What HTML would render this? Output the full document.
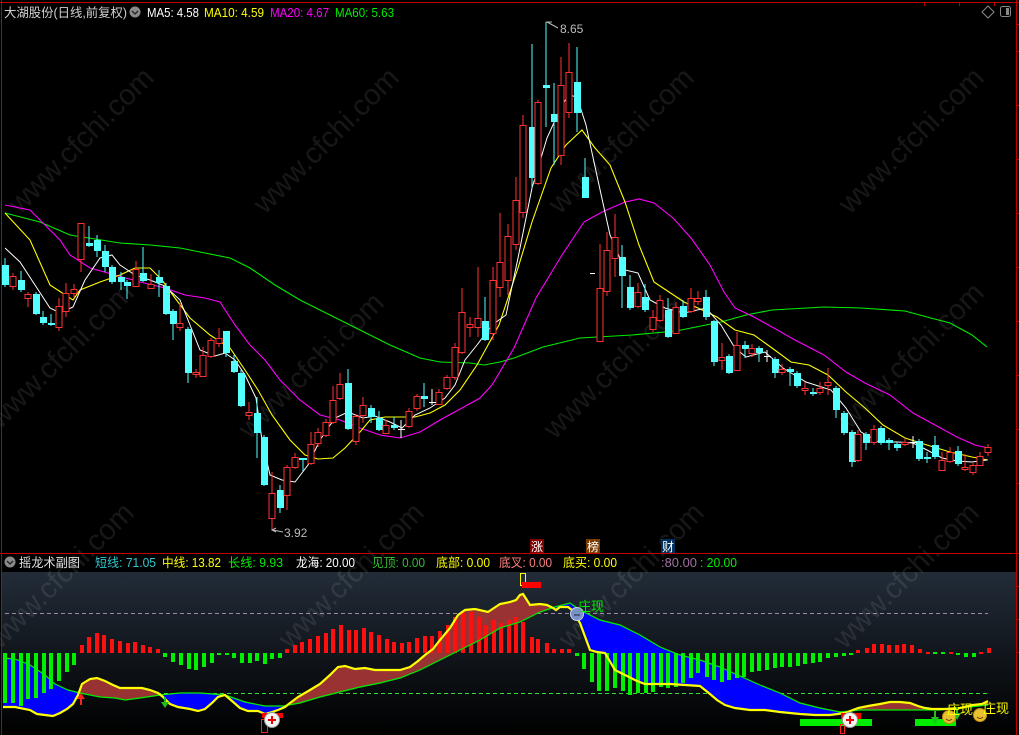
<!DOCTYPE html>
<html><head><meta charset="utf-8"><style>
html,body{margin:0;padding:0;background:#000;}
body{width:1019px;height:735px;overflow:hidden;position:relative;font-family:"Liberation Sans","Noto Sans CJK SC",sans-serif;}
svg{position:absolute;left:0;top:0;}
.r line{stroke:#ff3232}.r rect{fill:#000;stroke:#ff3232;stroke-width:1}
.c line{stroke:#54ffff}.c rect{fill:#54ffff}
</style></head><body>
<svg width="1019" height="735" viewBox="0 0 1019 735">
<defs>
<linearGradient id="bg" x1="0" y1="0" x2="0" y2="1">
<stop offset="0" stop-color="#222c38"/><stop offset="1" stop-color="#000"/>
</linearGradient>
<clipPath id="aboveG"><polygon points="3,572 3,658 15,659 30,665 45,675 55,684 68,690 80,693 90,695 100,697 115,698 125,700 140,698 160,695 180,693 200,693 225,695 245,702 265,706 283,706 300,703 320,697 340,692 360,687 380,683 400,678 420,670 440,660 460,650 480,640 500,628 520,622 540,612 555,607 570,603 580,610 600,620 620,625 640,635 660,647 680,655 700,660 720,667 740,676 760,685 780,693 800,703 820,708 840,712 860,710 880,710 900,710 920,710 940,710 960,708 988,705 988,572"/></clipPath>
<clipPath id="belowG"><polygon points="3,735 3,658 15,659 30,665 45,675 55,684 68,690 80,693 90,695 100,697 115,698 125,700 140,698 160,695 180,693 200,693 225,695 245,702 265,706 283,706 300,703 320,697 340,692 360,687 380,683 400,678 420,670 440,660 460,650 480,640 500,628 520,622 540,612 555,607 570,603 580,610 600,620 620,625 640,635 660,647 680,655 700,660 720,667 740,676 760,685 780,693 800,703 820,708 840,712 860,710 880,710 900,710 920,710 940,710 960,708 988,705 988,735"/></clipPath>
</defs>
<rect x="0" y="0" width="1019" height="735" fill="#000"/>
<rect x="2" y="572" width="1014" height="163" fill="url(#bg)"/>
<g fill="#fff" fill-opacity="0.09" font-size="29" font-family="Liberation Sans,sans-serif">
<text transform="translate(20,215) rotate(-45)">www.cfchi.com</text>
<text transform="translate(265,215) rotate(-45)">www.cfchi.com</text>
<text transform="translate(560,215) rotate(-45)">www.cfchi.com</text>
<text transform="translate(850,215) rotate(-45)">www.cfchi.com</text>
<text transform="translate(0,430) rotate(-45)">www.cfchi.com</text>
<text transform="translate(250,440) rotate(-45)">www.cfchi.com</text>
<text transform="translate(555,440) rotate(-45)">www.cfchi.com</text>
<text transform="translate(850,430) rotate(-45)">www.cfchi.com</text>
<text transform="translate(0,650) rotate(-45)">www.cfchi.com</text>
<text transform="translate(290,650) rotate(-45)">www.cfchi.com</text>
<text transform="translate(570,650) rotate(-45)">www.cfchi.com</text>
<text transform="translate(845,650) rotate(-45)">www.cfchi.com</text>
</g>
<line x1="0" y1="2.5" x2="1019" y2="2.5" stroke="#c00000"/>
<line x1="1.5" y1="0" x2="1.5" y2="735" stroke="#c00000"/>
<line x1="1016.5" y1="0" x2="1016.5" y2="735" stroke="#c00000"/>
<line x1="0" y1="553.5" x2="1019" y2="553.5" stroke="#c00000"/>
<g stroke="#c00000"><line x1="924.5" y1="2" x2="924.5" y2="6"/><line x1="959.5" y1="2" x2="959.5" y2="6"/><line x1="994.5" y1="2" x2="994.5" y2="6"/>
<line x1="1016" y1="24.5" x2="1019" y2="24.5"/><line x1="1016" y1="51.5" x2="1019" y2="51.5"/><line x1="1016" y1="105.5" x2="1019" y2="105.5"/><line x1="1016" y1="159.5" x2="1019" y2="159.5"/><line x1="1016" y1="213.5" x2="1019" y2="213.5"/><line x1="1016" y1="267.5" x2="1019" y2="267.5"/><line x1="1016" y1="321.5" x2="1019" y2="321.5"/><line x1="1016" y1="375.5" x2="1019" y2="375.5"/><line x1="1016" y1="429.5" x2="1019" y2="429.5"/><line x1="1016" y1="483.5" x2="1019" y2="483.5"/><line x1="1016" y1="586.5" x2="1019" y2="586.5"/><line x1="1016" y1="619.5" x2="1019" y2="619.5"/><line x1="1016" y1="652.5" x2="1019" y2="652.5"/>
</g>
<g fill="none" stroke-width="1.1">
<polyline stroke="#00ee00" points="5,213 40,222 70,235 120,243 150,245 180,248 200,252 230,258 250,268 275,285 300,300 330,315 360,330 390,345 420,358 440,362 470,363 484,365 500,362 514,358 543,347 580,338 632,335 676,331 721,322 746,315 772,310 824,307 861,308 905,311 927,317 950,323 972,335 987,347"/>
<polyline stroke="#ff00ff" points="5,205 30,210 45,225 60,240 70,255 90,268 115,275 140,282 165,288 185,295 205,298 220,302 235,325 250,345 265,360 280,380 300,400 320,415 340,420 360,428 380,435 400,438 420,432 440,420 462,408 480,398 492,385 514,348 536,298 562,255 584,222 602,212 625,202 639,199 654,203 673,218 691,238 710,265 724,292 735,308 754,317 772,327 795,340 824,355 846,372 865,383 890,395 913,413 935,425 957,437 975,445 988,448"/>
<polyline stroke="#ffff00" points="5,213 30,240 50,285 73,300 80,290 100,282 120,275 135,268 150,268 162,280 175,298 190,318 210,335 230,348 245,370 258,390 272,415 290,440 305,455 318,459 333,458 345,448 360,432 370,420 385,417 400,417 415,417 430,413 445,405 460,390 477,365 499,325 518,268 532,222 551,168 566,145 582,130 595,148 610,165 625,202 639,245 654,282 669,292 684,302 698,308 717,317 735,330 754,335 772,348 791,362 809,365 828,375 846,392 865,408 883,425 905,438 927,445 950,452 972,457 988,460"/>
<polyline stroke="#ffffff" stroke-width="1" points="5,248 20,262 35,285 50,308 60,313 73,307 85,280 100,258 112,255 120,265 135,275 150,280 165,286 180,300 190,325 200,350 215,356 225,353 235,360 245,375 256,398 262,440 270,475 282,480 295,482 308,465 320,440 335,418 348,412 363,418 375,416 390,422 402,428 415,415 430,408 445,398 455,385 465,360 477,345 492,325 506,315 518,258 532,188 547,138 562,105 569,95 577,97 586,125 599,185 610,235 625,270 638,273 650,300 665,308 684,313 706,308 721,325 735,348 746,357 765,352 783,368 806,382 831,390 846,408 861,432 879,442 898,442 913,443 927,450 942,458 957,461 972,462 987,460"/>
</g>
<g class="c">
<line x1="5" y1="258" x2="5" y2="287"/><rect x="2" y="265" width="7" height="20"/>
<line x1="21" y1="271" x2="21" y2="292"/><rect x="18" y="280" width="7" height="10"/>
<line x1="36" y1="292" x2="36" y2="315"/><rect x="33" y="294" width="7" height="20"/>
<line x1="43" y1="311" x2="43" y2="325"/><rect x="40" y="317" width="7" height="6"/>
<line x1="51" y1="314" x2="51" y2="326"/><rect x="48" y="323" width="7" height="2"/>
<line x1="89" y1="226" x2="89" y2="247"/><rect x="86" y="243" width="7" height="3"/>
<line x1="97" y1="235" x2="97" y2="257"/><rect x="94" y="240" width="7" height="11"/>
<line x1="105" y1="245" x2="105" y2="272"/><rect x="102" y="251" width="7" height="16"/>
<line x1="112" y1="265" x2="112" y2="284"/><rect x="109" y="267" width="7" height="15"/>
<line x1="121" y1="272" x2="121" y2="290"/><rect x="118" y="277" width="7" height="5"/>
<line x1="127" y1="280" x2="127" y2="299"/><rect x="124" y="282" width="7" height="4"/>
<line x1="143" y1="247" x2="143" y2="282"/><rect x="140" y="273" width="7" height="8"/>
<line x1="159" y1="270" x2="159" y2="297"/><rect x="156" y="277" width="7" height="6"/>
<line x1="166" y1="283" x2="166" y2="315"/><rect x="163" y="286" width="7" height="28"/>
<line x1="173" y1="309" x2="173" y2="340"/><rect x="170" y="311" width="7" height="13"/>
<line x1="188" y1="327" x2="188" y2="383"/><rect x="185" y="329" width="7" height="44"/>
<line x1="226" y1="331" x2="226" y2="357"/><rect x="223" y="331" width="7" height="22"/>
<line x1="234" y1="355" x2="234" y2="373"/><rect x="231" y="361" width="7" height="11"/>
<line x1="241" y1="370" x2="241" y2="407"/><rect x="238" y="373" width="7" height="33"/>
<line x1="257" y1="397" x2="257" y2="458"/><rect x="254" y="413" width="7" height="20"/>
<line x1="264" y1="435" x2="264" y2="486"/><rect x="261" y="437" width="7" height="48"/>
<line x1="280" y1="485" x2="280" y2="513"/><rect x="277" y="490" width="7" height="18"/>
<line x1="303" y1="458" x2="303" y2="471"/><rect x="299" y="458" width="8" height="2"/>
<line x1="348" y1="369" x2="348" y2="430"/><rect x="345" y="383" width="7" height="46"/>
<line x1="371" y1="405" x2="371" y2="423"/><rect x="368" y="408" width="7" height="9"/>
<line x1="379" y1="411" x2="379" y2="431"/><rect x="376" y="418" width="7" height="12"/>
<line x1="394" y1="417" x2="394" y2="430"/><rect x="391" y="425" width="7" height="3"/>
<line x1="424" y1="383" x2="424" y2="407"/><rect x="421" y="396" width="7" height="3"/>
<line x1="485" y1="297" x2="485" y2="341"/><rect x="482" y="321" width="7" height="19"/>
<line x1="532" y1="44" x2="532" y2="188"/><rect x="529" y="127" width="7" height="51"/>
<line x1="546" y1="22" x2="546" y2="127"/><rect x="543" y="85" width="7" height="3"/>
<line x1="554" y1="83" x2="554" y2="165"/><rect x="551" y="114" width="7" height="8"/>
<line x1="577" y1="47" x2="577" y2="132"/><rect x="574" y="82" width="7" height="31"/>
<line x1="585" y1="158" x2="585" y2="198"/><rect x="582" y="177" width="7" height="21"/>
<line x1="622" y1="245" x2="622" y2="308"/><rect x="619" y="257" width="7" height="19"/>
<line x1="630" y1="275" x2="630" y2="310"/><rect x="627" y="287" width="7" height="21"/>
<line x1="645" y1="284" x2="645" y2="312"/><rect x="642" y="297" width="7" height="13"/>
<line x1="668" y1="298" x2="668" y2="338"/><rect x="665" y="310" width="7" height="27"/>
<line x1="683" y1="300" x2="683" y2="318"/><rect x="680" y="306" width="7" height="11"/>
<line x1="706" y1="290" x2="706" y2="320"/><rect x="703" y="297" width="7" height="20"/>
<line x1="714" y1="320" x2="714" y2="366"/><rect x="711" y="321" width="7" height="41"/>
<line x1="729" y1="354" x2="729" y2="374"/><rect x="726" y="356" width="7" height="17"/>
<line x1="745" y1="341" x2="745" y2="358"/><rect x="742" y="345" width="7" height="4"/>
<line x1="759" y1="346" x2="759" y2="362"/><rect x="756" y="348" width="7" height="5"/>
<line x1="775" y1="357" x2="775" y2="378"/><rect x="772" y="359" width="7" height="14"/>
<line x1="790" y1="367" x2="790" y2="386"/><rect x="787" y="369" width="7" height="3"/>
<line x1="797" y1="371" x2="797" y2="388"/><rect x="794" y="373" width="7" height="13"/>
<line x1="813" y1="388" x2="813" y2="396"/><rect x="810" y="392" width="7" height="2"/>
<line x1="836" y1="386" x2="836" y2="418"/><rect x="833" y="388" width="7" height="22"/>
<line x1="844" y1="411" x2="844" y2="435"/><rect x="841" y="413" width="7" height="20"/>
<line x1="852" y1="430" x2="852" y2="467"/><rect x="849" y="432" width="7" height="30"/>
<line x1="866" y1="432" x2="866" y2="450"/><rect x="863" y="434" width="7" height="9"/>
<line x1="881" y1="426" x2="881" y2="445"/><rect x="878" y="428" width="7" height="15"/>
<line x1="889" y1="438" x2="889" y2="450"/><rect x="886" y="440" width="7" height="3"/>
<line x1="897" y1="442" x2="897" y2="451"/><rect x="894" y="444" width="7" height="4"/>
<line x1="919" y1="439" x2="919" y2="461"/><rect x="916" y="441" width="7" height="18"/>
<line x1="927" y1="452" x2="927" y2="463"/><rect x="924" y="457" width="7" height="2"/>
<line x1="935" y1="436" x2="935" y2="459"/><rect x="932" y="445" width="7" height="12"/>
<line x1="958" y1="446" x2="958" y2="466"/><rect x="955" y="451" width="7" height="13"/>
</g>
<g class="r">
<line x1="13" y1="273" x2="13" y2="290"/><rect x="10" y="276.5" width="6" height="10"/>
<line x1="28" y1="292" x2="28" y2="307"/><rect x="25" y="294.5" width="6" height="4"/>
<line x1="59" y1="298" x2="59" y2="331"/><rect x="56" y="306.5" width="6" height="21"/>
<line x1="66" y1="283" x2="66" y2="317"/><rect x="63" y="293.5" width="6" height="18"/>
<line x1="74" y1="284" x2="74" y2="297"/><rect x="71" y="289.5" width="6" height="4"/>
<line x1="81" y1="223" x2="81" y2="272"/><rect x="78" y="223.5" width="6" height="36"/>
<line x1="136" y1="261" x2="136" y2="287"/><rect x="133" y="269.5" width="6" height="17"/>
<line x1="151" y1="274" x2="151" y2="289"/><rect x="148" y="284.5" width="6" height="4"/>
<line x1="180" y1="303" x2="180" y2="331"/><rect x="177" y="323.5" width="6" height="4"/>
<line x1="196" y1="369" x2="196" y2="378"/><rect x="193" y="372.5" width="6" height="2"/>
<line x1="203" y1="347" x2="203" y2="377"/><rect x="200" y="355.5" width="6" height="21"/>
<line x1="211" y1="338" x2="211" y2="358"/><rect x="208" y="340.5" width="6" height="16"/>
<line x1="219" y1="328" x2="219" y2="347"/><rect x="216" y="338.5" width="6" height="5"/>
<line x1="249" y1="402" x2="249" y2="420"/><rect x="246" y="412.5" width="6" height="3"/>
<line x1="272" y1="472" x2="272" y2="530"/><rect x="269" y="493.5" width="6" height="25"/>
<line x1="287" y1="465" x2="287" y2="510"/><rect x="284" y="467.5" width="6" height="28"/>
<line x1="295" y1="453" x2="295" y2="469"/><rect x="292" y="457.5" width="6" height="10"/>
<line x1="311" y1="432" x2="311" y2="465"/><rect x="308" y="444.5" width="6" height="19"/>
<line x1="318" y1="428" x2="318" y2="447"/><rect x="315" y="432.5" width="6" height="11"/>
<line x1="326" y1="419" x2="326" y2="437"/><rect x="323" y="422.5" width="6" height="13"/>
<line x1="333" y1="386" x2="333" y2="424"/><rect x="330" y="400.5" width="6" height="22"/>
<line x1="340" y1="373" x2="340" y2="400"/><rect x="337" y="384.5" width="6" height="14"/>
<line x1="356" y1="414" x2="356" y2="445"/><rect x="353" y="416.5" width="6" height="25"/>
<line x1="363" y1="397" x2="363" y2="423"/><rect x="360" y="405.5" width="6" height="10"/>
<line x1="386" y1="420" x2="386" y2="434"/><rect x="383" y="425.5" width="6" height="8"/>
<line x1="409" y1="408" x2="409" y2="428"/><rect x="406" y="411.5" width="6" height="15"/>
<line x1="417" y1="394" x2="417" y2="411"/><rect x="414" y="396.5" width="6" height="12"/>
<line x1="439" y1="389" x2="439" y2="405"/><rect x="436" y="392.5" width="6" height="12"/>
<line x1="447" y1="375" x2="447" y2="390"/><rect x="444" y="377.5" width="6" height="11"/>
<line x1="455" y1="343" x2="455" y2="380"/><rect x="452" y="347.5" width="6" height="30"/>
<line x1="462" y1="288" x2="462" y2="354"/><rect x="459" y="312.5" width="6" height="40"/>
<line x1="470" y1="317" x2="470" y2="337"/><rect x="467" y="324.5" width="6" height="3"/>
<line x1="478" y1="267" x2="478" y2="337"/><rect x="475" y="318.5" width="6" height="9"/>
<line x1="493" y1="267" x2="493" y2="340"/><rect x="490" y="280.5" width="6" height="53"/>
<line x1="500" y1="213" x2="500" y2="297"/><rect x="497" y="262.5" width="6" height="25"/>
<line x1="508" y1="224" x2="508" y2="295"/><rect x="505" y="236.5" width="6" height="44"/>
<line x1="516" y1="177" x2="516" y2="250"/><rect x="513" y="200.5" width="6" height="44"/>
<line x1="523" y1="115" x2="523" y2="218"/><rect x="520" y="125.5" width="6" height="87"/>
<line x1="538" y1="100" x2="538" y2="185"/><rect x="535" y="102.5" width="6" height="81"/>
<line x1="561" y1="57" x2="561" y2="165"/><rect x="558" y="85.5" width="6" height="70"/>
<line x1="569" y1="43" x2="569" y2="118"/><rect x="566" y="72.5" width="6" height="40"/>
<line x1="600" y1="244" x2="600" y2="341"/><rect x="597" y="288.5" width="6" height="53"/>
<line x1="607" y1="232" x2="607" y2="296"/><rect x="604" y="250.5" width="6" height="41"/>
<line x1="615" y1="214" x2="615" y2="277"/><rect x="612" y="237.5" width="6" height="21"/>
<line x1="638" y1="283" x2="638" y2="308"/><rect x="635" y="292.5" width="6" height="14"/>
<line x1="653" y1="310" x2="653" y2="332"/><rect x="650" y="317.5" width="6" height="12"/>
<line x1="660" y1="295" x2="660" y2="322"/><rect x="657" y="300.5" width="6" height="20"/>
<line x1="676" y1="302" x2="676" y2="334"/><rect x="673" y="307.5" width="6" height="26"/>
<line x1="691" y1="288" x2="691" y2="313"/><rect x="688" y="298.5" width="6" height="13"/>
<line x1="698" y1="291" x2="698" y2="305"/><rect x="695" y="298.5" width="6" height="3"/>
<line x1="722" y1="343" x2="722" y2="370"/><rect x="719" y="357.5" width="6" height="3"/>
<line x1="737" y1="332" x2="737" y2="371"/><rect x="734" y="345.5" width="6" height="25"/>
<line x1="752" y1="344" x2="752" y2="357"/><rect x="749" y="348.5" width="6" height="5"/>
<line x1="782" y1="364" x2="782" y2="375"/><rect x="779" y="369.5" width="6" height="3"/>
<line x1="805" y1="382" x2="805" y2="395"/><rect x="802" y="388.5" width="6" height="2"/>
<line x1="820" y1="382" x2="820" y2="395"/><rect x="817" y="388.5" width="6" height="4"/>
<line x1="828" y1="368" x2="828" y2="395"/><rect x="825" y="382.5" width="6" height="3"/>
<line x1="858" y1="430" x2="858" y2="462"/><rect x="855" y="434.5" width="6" height="26"/>
<line x1="874" y1="425" x2="874" y2="445"/><rect x="871" y="429.5" width="6" height="13"/>
<line x1="905" y1="438" x2="905" y2="446"/><rect x="902" y="442.5" width="6" height="2"/>
<line x1="942" y1="452" x2="942" y2="471"/><rect x="939" y="460.5" width="6" height="10"/>
<line x1="950" y1="447" x2="950" y2="463"/><rect x="947" y="452.5" width="6" height="9"/>
<line x1="965" y1="454" x2="965" y2="471"/><rect x="962" y="467.5" width="6" height="2"/>
<line x1="973" y1="463" x2="973" y2="475"/><rect x="970" y="465.5" width="6" height="7"/>
<line x1="980" y1="452" x2="980" y2="466"/><rect x="977" y="456.5" width="6" height="9"/>
<line x1="988" y1="444" x2="988" y2="456"/><rect x="985" y="447.5" width="6" height="5"/>
</g>
<g stroke="#fff"><line x1="401" y1="420" x2="401" y2="438"/><line x1="398" y1="429.5" x2="405" y2="429.5"/>
<line x1="432" y1="389" x2="432" y2="405"/><line x1="429" y1="402.5" x2="436" y2="402.5"/>
<line x1="590" y1="273.5" x2="595" y2="273.5"/>
<line x1="767" y1="350" x2="767" y2="362"/><line x1="764" y1="356.5" x2="771" y2="356.5"/>
<line x1="913" y1="436" x2="913" y2="448"/><line x1="910" y1="442.5" x2="917" y2="442.5"/></g>
<g fill="#bbb" font-size="12">
<text x="560" y="33">8.65</text>
<text x="284" y="537">3.92</text></g>
<g stroke="#bbb" fill="none"><polyline points="546,22 552,22"/><line x1="547" y1="22" x2="558" y2="28"/>
<line x1="273" y1="530" x2="283" y2="532"/><polyline points="276,528 272,530 276,532"/></g>
<path d="M988,6 L994,12 L988,18 L982,12 Z" fill="none" stroke="#888"/>
<rect x="1000.5" y="6.5" width="10" height="10" rx="2" fill="none" stroke="#888"/><rect x="1006" y="8" width="3" height="7" fill="#888"/>
<rect x="530" y="539" width="14" height="14" fill="#800000"/><text x="531" y="551" fill="#fff" font-size="12">涨</text>
<rect x="586" y="539" width="14" height="14" fill="#7a3a00"/><text x="587" y="551" fill="#fff" font-size="12">榜</text>
<rect x="661" y="539" width="14" height="14" fill="#003060"/><text x="662" y="551" fill="#fff" font-size="12">财</text>

<line x1="5" y1="613.5" x2="988" y2="613.5" stroke="#a088a8" stroke-dasharray="4,3"/>
<line x1="3" y1="693.5" x2="988" y2="693.5" stroke="#33dd33" stroke-dasharray="4,3"/>
<polygon clip-path="url(#aboveG)" fill="#993333" points="3,735 3,707 15,707 30,710 37,714 45,715 53,716 60,713 67,709 73,704 78,695 82,684 90,679 97,678 105,681 113,685 120,688 142,688 150,690 158,693 163,697 170,704 178,707 190,709 198,711 205,709 212,703 218,697 225,695 232,701 240,708 248,711 258,711 265,714 272,712 278,710 285,707 290,703 298,697 310,690 320,684 330,675 338,667 345,666 355,669 365,668 375,670 400,670 410,667 418,661 425,655 433,649 440,640 450,628 458,615 465,610 475,609 488,612 500,604 510,602 516,600 520,595 523,594 530,605 540,604 547,605 553,608 556,610 560,607 568,607 572,610 580,623 590,650 597,652 605,653 615,670 625,675 637,681 645,684 670,684 685,685 700,686 710,694 717,700 725,705 735,708 750,710 765,710 780,712 800,714 815,715 830,715 845,713 858,708 868,706 880,704 890,702 900,702 910,703 918,706 925,708 932,709 945,709 960,708 973,705 982,704 988,701 988,735"/>
<polygon clip-path="url(#belowG)" fill="#0000ff" points="3,572 3,707 15,707 30,710 37,714 45,715 53,716 60,713 67,709 73,704 78,695 82,684 90,679 97,678 105,681 113,685 120,688 142,688 150,690 158,693 163,697 170,704 178,707 190,709 198,711 205,709 212,703 218,697 225,695 232,701 240,708 248,711 258,711 265,714 272,712 278,710 285,707 290,703 298,697 310,690 320,684 330,675 338,667 345,666 355,669 365,668 375,670 400,670 410,667 418,661 425,655 433,649 440,640 450,628 458,615 465,610 475,609 488,612 500,604 510,602 516,600 520,595 523,594 530,605 540,604 547,605 553,608 556,610 560,607 568,607 572,610 580,623 590,650 597,652 605,653 615,670 625,675 637,681 645,684 670,684 685,685 700,686 710,694 717,700 725,705 735,708 750,710 765,710 780,712 800,714 815,715 830,715 845,713 858,708 868,706 880,704 890,702 900,702 910,703 918,706 925,708 932,709 945,709 960,708 973,705 982,704 988,701 988,572"/>
<g fill="#00ee00">
<rect x="3" y="653" width="4" height="50"/><rect x="11" y="653" width="4" height="50"/><rect x="19" y="653" width="4" height="53"/><rect x="26" y="653" width="4" height="46"/><rect x="34" y="653" width="4" height="45"/><rect x="42" y="653" width="4" height="40"/><rect x="49" y="653" width="4" height="36"/><rect x="57" y="653" width="4" height="28"/><rect x="65" y="653" width="4" height="19"/><rect x="72" y="653" width="4" height="12"/>
<rect x="163" y="653" width="4" height="4"/><rect x="171" y="653" width="4" height="9"/><rect x="179" y="653" width="4" height="12"/><rect x="187" y="653" width="4" height="16"/><rect x="194" y="653" width="4" height="17"/><rect x="202" y="653" width="4" height="14"/><rect x="210" y="653" width="4" height="10"/><rect x="217" y="653" width="4" height="2"/><rect x="225" y="653" width="4" height="2"/><rect x="232" y="653" width="4" height="5"/><rect x="240" y="653" width="4" height="10"/><rect x="248" y="653" width="4" height="10"/><rect x="255" y="653" width="4" height="8"/><rect x="263" y="653" width="4" height="11"/><rect x="270" y="653" width="4" height="6"/><rect x="278" y="653" width="4" height="5"/>
<rect x="575" y="653" width="4" height="3"/><rect x="582" y="653" width="4" height="16"/><rect x="590" y="653" width="4" height="29"/><rect x="597" y="653" width="4" height="38"/><rect x="605" y="653" width="4" height="38"/><rect x="613" y="653" width="4" height="35"/><rect x="621" y="653" width="4" height="38"/><rect x="628" y="653" width="4" height="42"/><rect x="636" y="653" width="4" height="40"/><rect x="644" y="653" width="4" height="40"/><rect x="651" y="653" width="4" height="39"/><rect x="659" y="653" width="4" height="34"/><rect x="666" y="653" width="4" height="35"/><rect x="674" y="653" width="4" height="34"/><rect x="681" y="653" width="4" height="30"/><rect x="689" y="653" width="4" height="25"/><rect x="696" y="653" width="4" height="20"/><rect x="705" y="653" width="4" height="24"/><rect x="712" y="653" width="4" height="27"/><rect x="720" y="653" width="4" height="29"/><rect x="727" y="653" width="4" height="27"/><rect x="735" y="653" width="4" height="25"/><rect x="742" y="653" width="4" height="24"/><rect x="750" y="653" width="4" height="19"/><rect x="757" y="653" width="4" height="18"/><rect x="765" y="653" width="4" height="17"/><rect x="773" y="653" width="4" height="15"/><rect x="780" y="653" width="4" height="14"/><rect x="788" y="653" width="4" height="14"/><rect x="796" y="653" width="4" height="13"/><rect x="803" y="653" width="4" height="11"/><rect x="811" y="653" width="4" height="10"/><rect x="818" y="653" width="4" height="9"/><rect x="826" y="653" width="4" height="5"/><rect x="834" y="653" width="4" height="4"/><rect x="842" y="653" width="4" height="3"/><rect x="849" y="653" width="4" height="2"/>
<rect x="933" y="652" width="4" height="2"/><rect x="941" y="652" width="4" height="2"/><rect x="956" y="653" width="4" height="2"/><rect x="964" y="653" width="4" height="4"/><rect x="972" y="653" width="4" height="4"/>
</g>
<g fill="#ff1010">
<rect x="80" y="645" width="4" height="8"/><rect x="87" y="637" width="4" height="16"/><rect x="95" y="633" width="4" height="20"/><rect x="102" y="635" width="4" height="18"/><rect x="110" y="639" width="4" height="14"/><rect x="118" y="641" width="4" height="12"/><rect x="126" y="643" width="4" height="10"/><rect x="133" y="642" width="4" height="11"/><rect x="141" y="645" width="4" height="8"/><rect x="148" y="647" width="4" height="6"/><rect x="156" y="649" width="4" height="4"/>
<rect x="285" y="649" width="4" height="4"/><rect x="293" y="645" width="4" height="8"/><rect x="300" y="642" width="4" height="11"/><rect x="308" y="639" width="4" height="14"/><rect x="316" y="636" width="4" height="17"/><rect x="324" y="633" width="4" height="20"/><rect x="331" y="629" width="4" height="24"/><rect x="339" y="625" width="4" height="28"/><rect x="347" y="630" width="4" height="23"/><rect x="354" y="630" width="4" height="23"/><rect x="362" y="628" width="4" height="25"/><rect x="369" y="632" width="4" height="21"/><rect x="377" y="635" width="4" height="18"/><rect x="385" y="639" width="4" height="14"/><rect x="392" y="642" width="4" height="11"/><rect x="400" y="643" width="4" height="10"/><rect x="407" y="642" width="4" height="11"/><rect x="415" y="638" width="4" height="15"/><rect x="423" y="636" width="4" height="17"/><rect x="430" y="636" width="4" height="17"/><rect x="438" y="631" width="4" height="22"/><rect x="446" y="625" width="4" height="28"/><rect x="453" y="617" width="4" height="36"/><rect x="461" y="613" width="4" height="40"/><rect x="469" y="612" width="4" height="41"/><rect x="477" y="617" width="4" height="36"/><rect x="484" y="625" width="4" height="28"/><rect x="492" y="620" width="4" height="33"/><rect x="499" y="623" width="4" height="30"/><rect x="507" y="620" width="4" height="33"/><rect x="514" y="617" width="4" height="36"/><rect x="521" y="622" width="4" height="31"/>
<rect x="530" y="637" width="4" height="16"/><rect x="536" y="639" width="4" height="14"/><rect x="545" y="643" width="4" height="10"/><rect x="552" y="649" width="4" height="4"/><rect x="560" y="649" width="4" height="4"/><rect x="567" y="649" width="4" height="4"/>
<rect x="856" y="650" width="4" height="3"/><rect x="865" y="648" width="4" height="5"/><rect x="872" y="644" width="4" height="9"/><rect x="880" y="644" width="4" height="9"/><rect x="887" y="645" width="4" height="8"/><rect x="895" y="645" width="4" height="8"/><rect x="902" y="644" width="4" height="9"/><rect x="910" y="645" width="4" height="8"/><rect x="918" y="649" width="4" height="4"/><rect x="926" y="652" width="4" height="2"/><rect x="949" y="652" width="4" height="2"/><rect x="979" y="652" width="4" height="2"/><rect x="987" y="648" width="4" height="5"/>
</g>
<polyline fill="none" stroke="#00ee00" stroke-width="1.2" points="3,658 15,659 30,665 45,675 55,684 68,690 80,693 90,695 100,697 115,698 125,700 140,698 160,695 180,693 200,693 225,695 245,702 265,706 283,706 300,703 320,697 340,692 360,687 380,683 400,678 420,670 440,660 460,650 480,640 500,628 520,622 540,612 555,607 570,603 580,610 600,620 620,625 640,635 660,647 680,655 700,660 720,667 740,676 760,685 780,693 800,703 820,708 840,712 860,710 880,710 900,710 920,710 940,710 960,708 988,705"/>
<polyline fill="none" stroke="#ffff00" stroke-width="2.2" points="3,707 15,707 30,710 37,714 45,715 53,716 60,713 67,709 73,704 78,695 82,684 90,679 97,678 105,681 113,685 120,688 142,688 150,690 158,693 163,697 170,704 178,707 190,709 198,711 205,709 212,703 218,697 225,695 232,701 240,708 248,711 258,711 265,714 272,712 278,710 285,707 290,703 298,697 310,690 320,684 330,675 338,667 345,666 355,669 365,668 375,670 400,670 410,667 418,661 425,655 433,649 440,640 450,628 458,615 465,610 475,609 488,612 500,604 510,602 516,600 520,595 523,594 530,605 540,604 547,605 553,608 556,610 560,607 568,607 572,610 580,623 590,650 597,652 605,653 615,670 625,675 637,681 645,684 670,684 685,685 700,686 710,694 717,700 725,705 735,708 750,710 765,710 780,712 800,714 815,715 830,715 845,713 858,708 868,706 880,704 890,702 900,702 910,703 918,706 925,708 932,709 945,709 960,708 973,705 982,704 988,701"/>
<path d="M81,693 L77,699 L80,699 L80,705 L82,705 L82,699 L85,699 Z" fill="#ff2020"/>
<path d="M165,708 L161,702 L164,702 L164,697 L166,697 L166,702 L169,702 Z" fill="#20c020"/>
<rect x="262" y="713" width="21" height="5" fill="#ff0000"/>
<rect x="261.5" y="719.5" width="6" height="13" fill="none" stroke="#ff2020"/>
<circle cx="272" cy="720" r="7.5" fill="#f4f4f4" stroke="#999"/><path d="M268,720 H276 M272,716 V724" stroke="#e00" stroke-width="2"/>
<rect x="520.5" y="573.5" width="5" height="12" fill="none" stroke="#ffff00"/>
<rect x="522" y="582" width="19" height="6" fill="#ff0000"/>
<circle cx="577" cy="614" r="6.5" fill="#7a90c8" stroke="#c8d4f0"/><path d="M574,615 h6" stroke="#223"/>
<text x="578" y="611" fill="#00ee00" font-size="13">庄现</text>
<rect x="800" y="719" width="72" height="7" fill="#00ee00"/>
<rect x="841" y="713" width="20" height="6" fill="#ff0000"/>
<rect x="840.5" y="724.5" width="4" height="9" fill="none" stroke="#ff2020"/>
<circle cx="850" cy="720" r="7.5" fill="#f4f4f4" stroke="#999"/><path d="M846,720 H854 M850,716 V724" stroke="#e00" stroke-width="2"/>
<rect x="915" y="719" width="41" height="7" fill="#00ee00"/>
<path d="M935,724 L931,717 L934,717 L934,711 L936,711 L936,717 L939,717 Z" fill="#20c020"/>
<path d="M957,720 L953,713 L956,713 L956,707 L958,707 L958,713 L961,713 Z" fill="#20c020"/>
<circle cx="949" cy="717" r="6.5" fill="#e8c030" stroke="#c09010"/><path d="M946,719 q3,3 6,0" stroke="#704000" fill="none"/>
<circle cx="980" cy="715" r="6.5" fill="#e8c030" stroke="#c09010"/><path d="M977,717 q3,3 6,0" stroke="#704000" fill="none"/>
<text x="947" y="714" fill="#ffff00" font-size="13">庄现</text>
<text x="983" y="713" fill="#ffff00" font-size="13">庄现</text>
<g font-size="12.5" lengthAdjust="spacingAndGlyphs">
<text x="4" y="17" fill="#d0d0d0" textLength="123" lengthAdjust="spacingAndGlyphs">大湖股份(日线,前复权)</text>
<circle cx="135" cy="12" r="5.5" fill="#8a8a8a"/><path d="M132,11 L135,14 L138,11" stroke="#222" fill="none" stroke-width="1.3"/>
<text x="147" y="17" fill="#ffffff" textLength="52" lengthAdjust="spacingAndGlyphs">MA5: 4.58</text>
<text x="204" y="17" fill="#ffff00" textLength="60" lengthAdjust="spacingAndGlyphs">MA10: 4.59</text>
<text x="270" y="17" fill="#ff00ff" textLength="59" lengthAdjust="spacingAndGlyphs">MA20: 4.67</text>
<text x="335" y="17" fill="#00ee00" textLength="59" lengthAdjust="spacingAndGlyphs">MA60: 5.63</text>
<circle cx="10" cy="562" r="5.5" fill="#8a8a8a"/><path d="M7,561 L10,564 L13,561" stroke="#222" fill="none" stroke-width="1.3"/>
<text x="19" y="567" fill="#e0e0e0" textLength="61" lengthAdjust="spacingAndGlyphs">摇龙术副图</text>
<text x="95" y="567" fill="#30c8d0" textLength="61" lengthAdjust="spacingAndGlyphs">短线: 71.05</text>
<text x="162" y="567" fill="#ffff00" textLength="59" lengthAdjust="spacingAndGlyphs">中线: 13.82</text>
<text x="228" y="567" fill="#00ee00" textLength="55" lengthAdjust="spacingAndGlyphs">长线: 9.93</text>
<text x="296" y="567" fill="#ffffff" textLength="59" lengthAdjust="spacingAndGlyphs">龙海: 20.00</text>
<text x="372" y="567" fill="#30c030" textLength="53" lengthAdjust="spacingAndGlyphs">见顶: 0.00</text>
<text x="436" y="567" fill="#ffff00" textLength="54" lengthAdjust="spacingAndGlyphs">底部: 0.00</text>
<text x="499" y="567" fill="#ff8080" textLength="53" lengthAdjust="spacingAndGlyphs">底叉: 0.00</text>
<text x="563" y="567" fill="#ffff00" textLength="54" lengthAdjust="spacingAndGlyphs">底买: 0.00</text>
<text x="661" y="567" fill="#a070a0" textLength="36" lengthAdjust="spacingAndGlyphs">:80.00</text>
<text x="700" y="567" fill="#00ee00" textLength="37" lengthAdjust="spacingAndGlyphs">: 20.00</text>
</g>
</svg>
</body></html>
